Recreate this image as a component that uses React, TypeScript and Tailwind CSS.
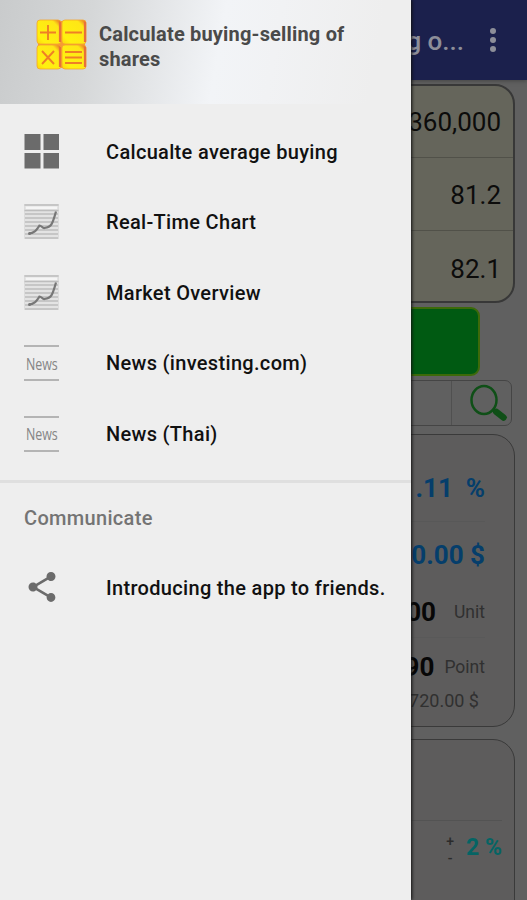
import type { ReactNode } from "react";

function AppLogo() {
  return (
    <svg className="h-[52px] w-[52px] shrink-0" viewBox="0 0 52 52">
      <defs>
        <linearGradient id="tile" x1="0" y1="1" x2="1" y2="0">
          <stop offset="0" stopColor="#fdd40c" />
          <stop offset="0.2" stopColor="#fff10f" />
          <stop offset="0.8" stopColor="#fee616" />
          <stop offset="1" stopColor="#e4562c" />
        </linearGradient>
      </defs>
      <rect x="2" y="2" width="47" height="47" fill="#f79a35" />
      <g fill="url(#tile)" stroke="#f5a52c" strokeWidth="0.8">
        <rect x="1" y="1" width="24" height="24" rx="3" />
        <rect x="26" y="1" width="24" height="24" rx="3" />
        <rect x="1" y="26" width="24" height="24" rx="3" />
        <rect x="26" y="26" width="24" height="24" rx="3" />
      </g>
      <path d="M24 3v20M49 3v20M24 28v20M49 28v20" stroke="#e8703a" strokeWidth="2.200" />
      <g stroke="#ef7f26" strokeWidth="1.9" fill="none">
        <path d="M4 13.500h16M12 6v15M29 13.500h17M6 32l12 13M18 32L6 45M29 33h17M29 38.500h17M29 44h17" />
      </g>
    </svg>
  );
}

function GridIcon() {
  return (
    <svg className="h-[36px] w-[36px]" viewBox="0 0 36 36" fill="#6b6b6b">
      <path d="M0.500 0h16v16h-16zM19.500 0h15.500v16h-15.500zM0.500 19h16v15.500h-16zM19.500 19h15.500v15.500h-15.500z" />
    </svg>
  );
}

function ChartIcon() {
  return (
    <svg className="h-[36px] w-[36px]" viewBox="0 0 36 36" fill="none">
      <rect x="0.500" y="0.500" width="34" height="34" fill="#e3e3e3" stroke="#dcdcdc" />
      <path d="M0.500 1h34M0.500 6.500h34M1 10h33M1 14h33M1 18h33M1 22h33M1 26h33M1 30h33M1 34h33" stroke="#bdbdbd" strokeWidth="1.500" />
      <path d="M2 3.800h31" stroke="#f5f5f5" strokeWidth="2.500" />
      <path d="M5 29.500c5 0 7-3 10.500-8c2 0 3 3 5 2.500c7-1 8-4 11.500-16.500" stroke="#777" strokeWidth="2.200" />
      <circle cx="5.500" cy="29.500" r="1.500" fill="#777" />
    </svg>
  );
}

function NewsIcon() {
  return (
    <div className="flex h-[36px] w-[35px] items-center justify-center border-y-2 border-[#b4b4b4]">
      <span className="origin-center scale-x-[0.73] font-['Open_Sans',sans-serif] text-[17px] font-medium leading-none text-[#858585]">News</span>
    </div>
  );
}

function ShareIcon() {
  return (
    <svg className="-mt-[2px] h-[36px] w-[36px]" viewBox="0 0 24 24" fill="#6b6b6b">
      <path d="M18 16.080c-.76 0-1.440.3-1.960.77L8.910 12.700c.05-.23.09-.46.09-.7s-.04-.47-.09-.7l7.050-4.110c.54.5 1.250.81 2.040.81 1.660 0 3-1.340 3-3s-1.340-3-3-3-3 1.340-3 3c0 .24.04.47.09.7L8.040 9.810C7.500 9.310 6.790 9 6 9c-1.660 0-3 1.340-3 3s1.340 3 3 3c.79 0 1.500-.31 2.040-.81l7.120 4.160c-.05.21-.08.43-.08.65 0 1.610 1.310 2.920 2.920 2.920s2.920-1.310 2.920-2.920-1.310-2.920-2.920-2.920z" />
    </svg>
  );
}

function SearchIcon() {
  return (
    <svg className="h-[38px] w-[40px]" viewBox="0 0 40 38" fill="none">
      <ellipse cx="15" cy="16" rx="12.500" ry="14" stroke="#0f4f17" strokeWidth="2.500" />
      <path d="M24 25.500l2.500 2" stroke="#0f4f17" strokeWidth="4" />
      <path d="M27.500 28l7 5.500" stroke="#0f4f17" strokeWidth="6.500" strokeLinecap="round" />
    </svg>
  );
}

function MenuItem({ icon, label }: { icon: ReactNode; label: string }) {
  return (
    <li className="flex h-[70.500px] items-center pl-[24px]">
      <span className="flex w-[82px]">{icon}</span>
      <span className="whitespace-nowrap text-[20px] font-medium tracking-[0.32px] text-[#111]">{label}</span>
    </li>
  );
}

function Drawer() {
  return (
    <aside className="absolute inset-y-0 left-0 w-[411px] bg-[#eeeeee] shadow-[1px_0_3px_#111]">
      <div className="flex h-[104px] bg-[linear-gradient(100deg,#c9cbcc_0%,#d5d7d8_22%,#e2e4e6_36%,#f2f4f7_53%,#f1f2f4_66%,#eeeeee_90%)] pl-[36px] pt-[19px]">
        <AppLogo />
        <h1 className="ml-[11px] mt-[3px] w-[280px] text-[20px] font-bold leading-[24.500px] tracking-[0.18px] text-[#4a4a4a]">
          Calculate buying-selling of shares
        </h1>
      </div>
      <ul className="pt-[12.500px]">
        <MenuItem icon={<GridIcon />} label="Calcualte average buying" />
        <MenuItem icon={<ChartIcon />} label="Real-Time Chart" />
        <MenuItem icon={<ChartIcon />} label="Market Overview" />
        <MenuItem icon={<NewsIcon />} label="News (investing.com)" />
        <MenuItem icon={<NewsIcon />} label="News (Thai)" />
      </ul>
      <div className="mt-[10.500px] h-[3px] bg-[#dfdfdf]" />
      <h2 className="flex h-[70px] items-center pl-[24px] text-[20px] font-medium tracking-[0.32px] text-[#747474]">Communicate</h2>
      <ul>
        <MenuItem icon={<ShareIcon />} label="Introducing the app to friends." />
      </ul>
    </aside>
  );
}

function Field({ value }: { value: string }) {
  return (
    <div className="flex h-[73px] shrink-0 items-center justify-end border-b border-[#515149] pr-[12px] pt-[3px] text-[26px] text-[#0c0c0b] first:h-[72px] first:pt-[2px] last:h-[70px] last:border-b-0 last:pt-[6px]">
      {value}
    </div>
  );
}

function Calculator() {
  return (
    <div className="h-full w-full bg-[#606060]">
      <header className="flex h-[80px] items-center justify-end bg-[#1b204c] pr-[31px] pt-[2px] text-[#8d8e99] shadow-[0_1px_4px_#444]">
        <span className="text-[26px] font-medium">g o...</span>
        <span className="mb-[3px] ml-[26px] flex flex-col gap-[3px]">
          <i className="h-[6px] w-[6px] rounded-full bg-[#8d8e99]" />
          <i className="h-[6px] w-[6px] rounded-full bg-[#8d8e99]" />
          <i className="h-[6px] w-[6px] rounded-full bg-[#8d8e99]" />
        </span>
      </header>
      <section className="ml-[12px] mt-[4px] flex h-[219px] w-[503px] flex-col rounded-[20px] border-2 border-[#383838] bg-[#65655b]">
        <Field value="360,000" />
        <Field value="81.2" />
        <Field value="82.1" />
      </section>
      <div className="ml-[47px] mt-[4px] h-[69px] w-[433px] rounded-[9px] border-2 border-[#3d6a0a] bg-[#005a12]" />
      <div className="ml-[15px] mt-[4px] flex h-[46px] w-[497px] justify-end rounded-[7px] border-[1.500px] border-[#454545]">
        <div className="flex w-[60px] items-center justify-end border-l border-[#505050] pr-[2px]">
          <SearchIcon />
        </div>
      </div>
      <section className="ml-[12px] mt-[8px] h-[293px] w-[503px] rounded-[22px] border-[1.500px] border-[#3a3a3a] bg-[#5d5c5c] pr-[29px] pt-[21px]">
        <div className="flex h-[66px] items-center justify-end whitespace-pre border-b border-[#585858] text-[26px] font-bold text-[#053e6b]">.11  %</div>
        <div className="flex h-[66px] items-center justify-end text-[26px] font-bold text-[#053e6b]">720.00 $</div>
        <div className="flex h-[50px] items-center justify-end border-b border-[#595959] text-[#303030]">
          <b className="text-[26px] text-[#070707]">100</b>
          <span className="ml-[18px] text-[17.500px]">Unit</span>
        </div>
        <div className="flex h-[58px] items-center justify-end text-[#303030]">
          <b className="text-[26px] text-[#070707]">90</b>
          <span className="ml-[10px] text-[17.500px]">Point</span>
        </div>
        <div className="-mt-[3px] pr-[6px] text-right text-[18px] leading-[16px] text-[#303030]">720.00 $</div>
      </section>
      <section className="ml-[12px] mt-[12px] h-[200px] w-[503px] rounded-[22px] border-[1.500px] border-[#3a3a3a] bg-[#5d5c5c] px-[12px]">
        <div className="h-[81px] border-b border-[#535353]" />
        <div className="flex h-[54px] items-center justify-end text-[#2b2b2b]">
          <span className="flex flex-col items-center pt-[3px] text-[14px] font-medium leading-[17px]">
            <span>+</span>
            <span>-</span>
          </span>
          <span className="ml-[12px] text-[23px] font-bold text-[#056464]">2 %</span>
        </div>
      </section>
    </div>
  );
}

export default function App() {
  return (
    <div className="relative h-[900px] w-[527px] overflow-hidden font-[Roboto,sans-serif]">
      <Calculator />
      <Drawer />
    </div>
  );
}
